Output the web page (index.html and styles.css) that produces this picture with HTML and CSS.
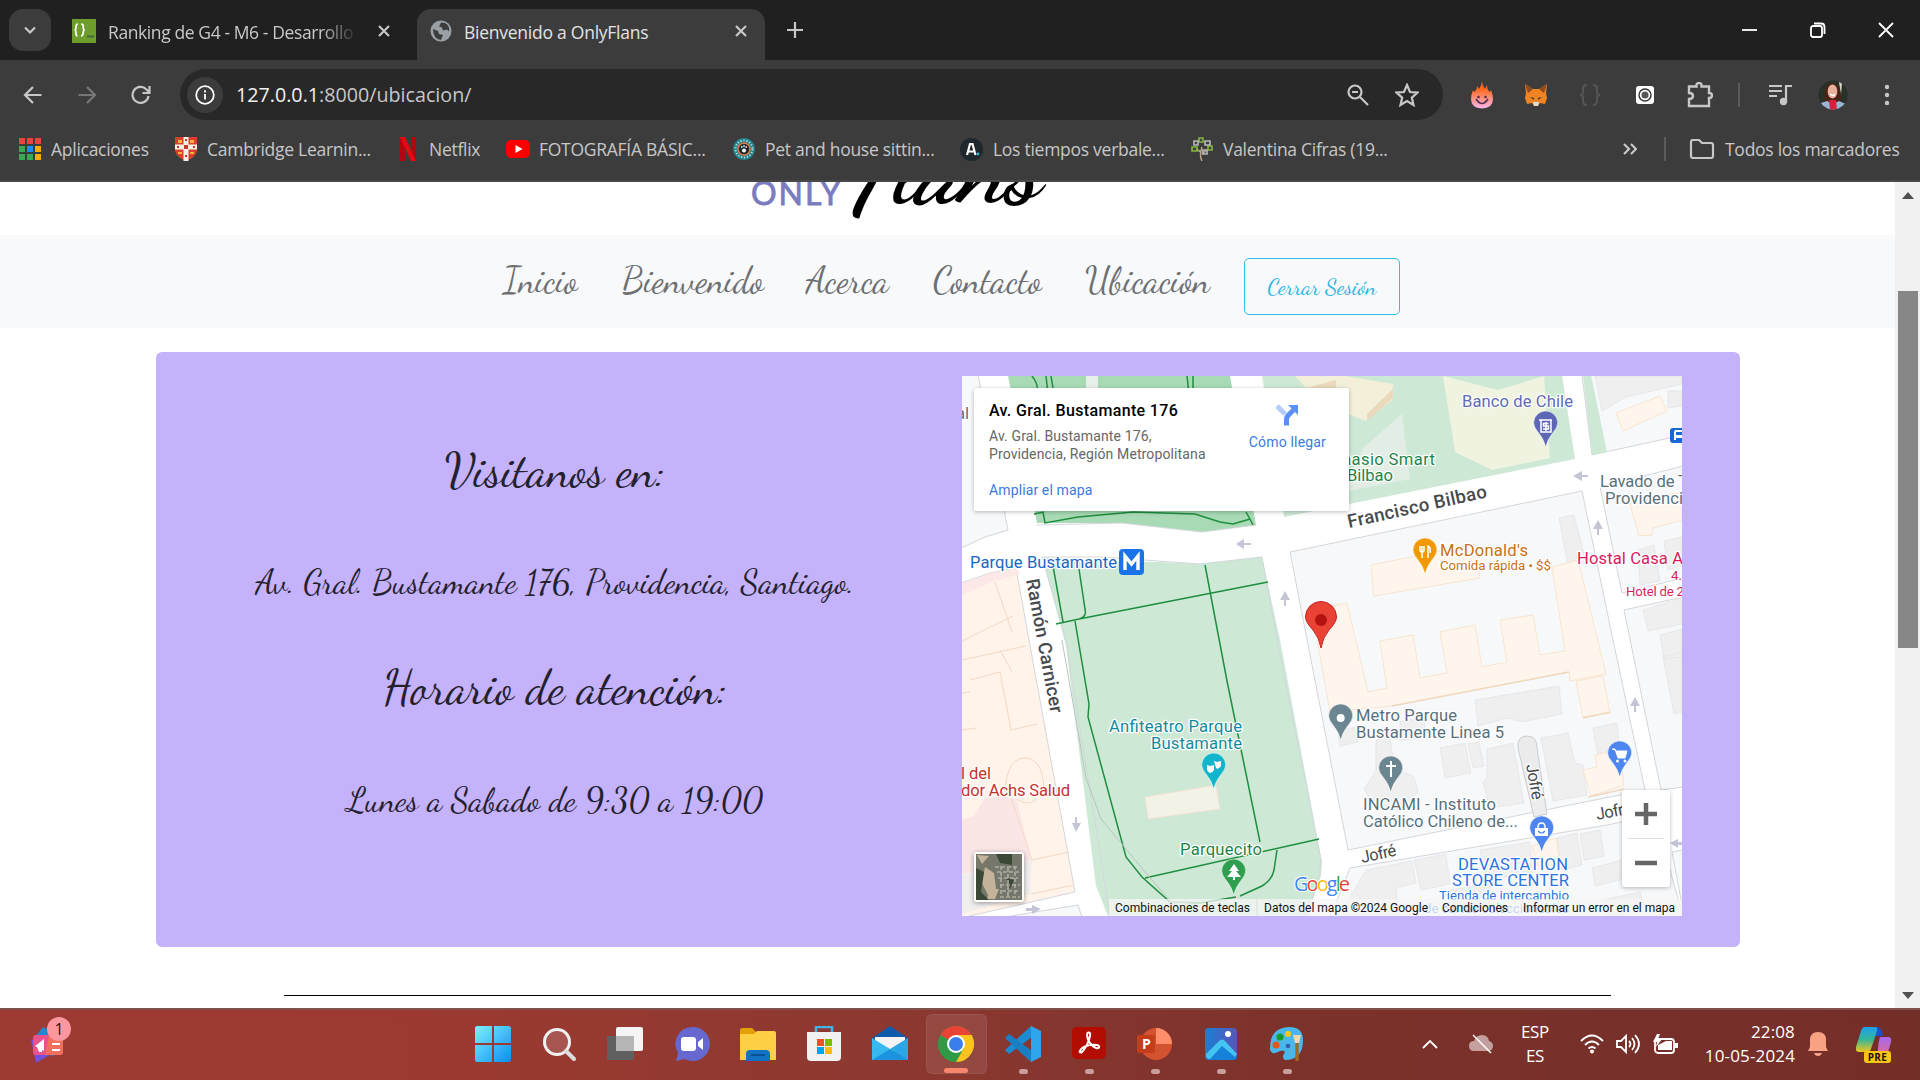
FILE: index.html
```html
<!DOCTYPE html>
<html lang="es">
<head>
<meta charset="utf-8">
<title>Bienvenido a OnlyFlans</title>
<link rel="stylesheet" href="styles.css">
</head>
<body>
<div class="screen">
  <header class="tabs">
    <div class="tab-search"><svg width="14" height="14" viewBox="0 0 14 14"><path d="M2 4.500l5 5 5-5" class="ln w2"/></svg></div>
    <div class="tab">
      <svg width="24" height="24" viewBox="0 0 24 24"><rect width="24" height="24" fill="#6f9d2b"/><path d="M6 5q-2 0-2 3t-1.500 3q1.500 0 1.500 3t1.500 3M9 5q2.500 0 2.300 3t1.500 3q-1.500 0-1.700 3T9 17" fill="none" stroke="#fff" stroke-width="1.700"/><path d="M15 17.500h7" stroke="#3f6a3a" stroke-width="2"/></svg>
      <span class="tab-name faded">Ranking de G4 - M6 - Desarrollo</span>
      <svg class="close" width="12" height="12" viewBox="0 0 12 12"><path d="M1 1l10 10M11 1L1 11" class="ln w2"/></svg>
    </div>
    <div class="tab active">
      <svg width="22" height="22" viewBox="0 0 22 22"><circle cx="11" cy="11" r="10.500" fill="#9aa0a6"/><path d="M3 9l5 2 1 3 4 1-2 5q-8-1-8-11zM11 2.500l-2 4 3 1 1 3 4-1 2 2q1-6-4-8.500z" fill="#3c3c3c"/></svg>
      <span class="tab-name">Bienvenido a OnlyFlans</span>
      <svg class="close" width="12" height="12" viewBox="0 0 12 12"><path d="M1 1l10 10M11 1L1 11" class="ln w2"/></svg>
    </div>
    <svg class="plus" width="16" height="16" viewBox="0 0 16 16"><path d="M8 0v16M0 8h16" class="ln w2"/></svg>
    <div class="win">
      <svg width="16" height="16" viewBox="0 0 16 16"><path d="M0 8h15" class="lw"/></svg>
      <svg width="16" height="16" viewBox="0 0 16 16"><rect x="1" y="4" width="11" height="11" rx="2" class="lw"/><path d="M4 1.500h7q3.500 0 3.500 3.500v7" class="lw"/></svg>
      <svg width="16" height="16" viewBox="0 0 16 16"><path d="M1 1l14 14M15 1L1 15" class="lw"/></svg>
    </div>
  </header>

  <div class="toolbar">
    <div class="navbtns">
      <svg width="20" height="20" viewBox="0 0 20 20"><path d="M18.500 10H2M10 2l-8 8 8 8" class="ln w2"/></svg>
      <svg width="20" height="20" viewBox="0 0 20 20"><path d="M1.500 10H18M10 2l8 8-8 8" fill="none" stroke="#777" stroke-width="2.200"/></svg>
      <svg width="20" height="20" viewBox="0 0 20 20"><path d="M17.500 11a8 8 0 1 1-2-6.500L18 7M18.500 1v7h-7" class="ln w2"/></svg>
    </div>
    <div class="omnibox">
      <span class="info"><svg width="20" height="20" viewBox="0 0 20 20"><circle cx="10" cy="10" r="8.800" class="lw"/><path d="M10 9v5.500M10 5.200v2.200" class="lw"/></svg></span>
      <span class="url"><b>127.0.0.1</b>:8000/ubicacion/</span>
      <svg width="22" height="22" viewBox="0 0 22 22"><circle cx="8" cy="8" r="6.500" class="ln w2"/><path d="M13 13l8 8M5 8h6" class="ln w2"/></svg>
      <svg width="24" height="24" viewBox="0 0 24 24"><path d="M12 2l3 7 7.500.6-5.700 5 1.700 7.400-6.500-4-6.500 4 1.700-7.400-5.700-5L9 9z" class="ln w2"/></svg>
    </div>
    <div class="exts">
      <svg width="22" height="28" viewBox="0 0 22 28"><defs><linearGradient id="fl" x2="0" y2="1"><stop offset=".3" stop-color="#ff6a1e"/><stop offset="1" stop-color="#f9b9ee"/></linearGradient></defs><path d="M11 0q0 4 3 8l2-4q0 5 3 7l1-2q2 5 2 9 0 9-11 9.500Q0 27 0 18q0-4 2-9l1 2q3-2 3-6l2 3q3-4 3-8z" fill="url(#fl)"/><path d="M5 18q6 9 12 0" fill="none" stroke="#55304a" stroke-width="1.600"/><circle cx="7.500" cy="16" r="1.300" fill="#55304a"/><circle cx="14.500" cy="16" r="1.300" fill="#55304a"/></svg>
      <svg width="24" height="24" viewBox="0 0 24 24"><path d="M1 1l8 5h6l8-5-1 9 1 5-2 6-5-1-2 3h-4l-2-3-5 1-2-6 1-5z" fill="#f08422"/><path d="M1 1l8 5-5 4zM23 1l-8 5 5 4z" fill="#8d4a20"/><path d="M6 14l4 1v2zM18 14l-4 1v2z" fill="#333"/><path d="M9 19h6l-1 4h-4z" fill="#ddd"/></svg>
      <svg width="22" height="24" viewBox="0 0 22 24"><path d="M8 2q-4 0-4 4v3q0 3-3 3 3 0 3 3v3q0 4 4 4M14 2q4 0 4 4v3q0 3 3 3-3 0-3 3v3q0 4-4 4" fill="none" stroke="#555" stroke-width="2"/></svg>
      <svg width="18" height="18" viewBox="0 0 18 18"><rect width="18" height="18" rx="3" fill="#fff"/><circle cx="9" cy="9" r="6" fill="none" stroke="#333" stroke-width="1.400"/><circle cx="9" cy="9" r="3.500" fill="#555"/></svg>
      <svg width="26" height="26" viewBox="0 0 26 26"><path d="M2 4.500h7.500q-.5-3.500 2.500-3.500t2.500 3.500H22V11q3 0 3 2.500T22 16v8H2v-7q4 0 4-3t-4-3z" fill="none" stroke="#c7c7c7" stroke-width="2.400"/></svg>
      <i class="vbar"></i>
      <svg width="24" height="22" viewBox="0 0 24 22"><path d="M1 2h13M1 7h13M1 12h8M18 17V2h6" class="ln w2"/><circle cx="15.500" cy="17.500" r="3.700" fill="#c7c7c7"/></svg>
      <svg width="30" height="30" viewBox="0 0 30 30"><defs><clipPath id="av"><circle cx="15" cy="15" r="14.500"/></clipPath></defs><g clip-path="url(#av)"><rect width="30" height="30" fill="#273127"/><path d="M21 2l3 1-1 12" fill="#d8d4c4"/><path d="M7 26Q4 3 14 3t9 20v5z" fill="#4a2318"/><ellipse cx="14.500" cy="11.500" rx="4.800" ry="7" fill="#e8b199"/><path d="M0 24l9-3 6 3 6-3 9 4v5H0z" fill="#9ab6d6"/><path d="M11 20h7l1 10h-7z" fill="#d8203b"/><path d="M12 14q3 3 5 0" stroke="#fff" stroke-width="1.500" fill="none"/></g></svg>
      <svg width="6" height="22" viewBox="0 0 6 22"><g fill="#c7c7c7"><circle cx="3" cy="3" r="2.200"/><circle cx="3" cy="11" r="2.200"/><circle cx="3" cy="19" r="2.200"/></g></svg>
    </div>
  </div>

  <div class="bookmarks">
    <a class="bm b1"><svg width="22" height="22" viewBox="0 0 22 22"><path d="M0 0h6v6H0zM8 0h6v6H8zM16 0h6v6h-6z" fill="#e8453c"/><path d="M0 8h6v6H0zM0 16h6v6H0zM8 16h6v6H8z" fill="#3aa757"/><path d="M8 8h6v6H8z" fill="#1a8cff"/><path d="M16 8h6v6h-6zM16 16h6v6h-6z" fill="#f9ab00"/></svg><span>Aplicaciones</span></a>
    <a class="bm b2"><svg width="22" height="24" viewBox="0 0 22 24"><path d="M0 0h22v14q-2 7-11 10Q2 21 0 14z" fill="#d8402e"/><path d="M11 0v24M0 10h22" stroke="#f4efe4" stroke-width="5"/><path d="M3 3h4v3H3zM15 3h4v3h-4zM3 15h4v2H3zM15 15h4v2h-4z" fill="#f0b53d"/><path d="M9 8h4v4H9zM2 9h2v2H2zM18 9h2v2h-2zM10 2h2v2h-2zM10 18h2v2h-2z" fill="#c23a2b"/></svg><span>Cambridge Learnin...</span></a>
    <a class="bm b3"><svg width="16" height="24" viewBox="0 0 16 24"><path d="M0 0h5v24H0zM11 0h5v24h-5z" fill="#b1060f"/><path d="M0 0h5l11 24h-5z" fill="#e50914"/></svg><span>Netflix</span></a>
    <a class="bm b4"><svg width="24" height="18" viewBox="0 0 24 18"><rect width="24" height="18" rx="5" fill="#f00"/><path d="M9.500 5l7 4-7 4z" fill="#fff"/></svg><span>FOTOGRAFÍA BÁSIC...</span></a>
    <a class="bm b5"><svg width="22" height="22" viewBox="0 0 22 22"><circle cx="11" cy="11" r="11" fill="#23808a"/><circle cx="11" cy="11" r="8.500" fill="none" stroke="#9fd6d4" stroke-width="2" stroke-dasharray="1.500 1.500"/><circle cx="11" cy="11" r="6" fill="#1c2b30" stroke="#e8794a" stroke-width="1.500"/><circle cx="11" cy="12.500" r="2" fill="#fff"/><path d="M8 9h1.500M10.200 8h1.600M12.500 9H14" stroke="#fff" stroke-width="1.500"/></svg><span>Pet and house sittin...</span></a>
    <a class="bm b6"><svg width="23" height="23" viewBox="0 0 23 23"><circle cx="11.500" cy="11.500" r="11.500" fill="#1f282d"/><path d="M7 17l3-11h2.500l3 11M8.500 13.500h5" fill="none" stroke="#fff" stroke-width="2.200"/><circle cx="18" cy="16" r="1.400" fill="#31b8d8"/></svg><span>Los tiempos verbale...</span></a>
    <a class="bm b7"><svg width="22" height="24" viewBox="0 0 22 24"><path d="M11 24q-3-5 0-14M11 17l5-4M10 15l-5-3" stroke="#b7a58c" stroke-width="1.500" fill="none"/><g fill="none" stroke-width="1.600"><path d="M8 1h4v4H8zM1 10h5v4H1zM17 9h4v4h-4z" stroke="#84b740"/><path d="M3 4h4v4H3zM14 4h5v4h-5zM12 13h4v4h-4z" stroke="#b9b9b9"/></g></svg><span>Valentina Cifras (19...</span></a>
    <span class="more"><svg width="14" height="12" viewBox="0 0 14 12"><path d="M1 1l5 5-5 5M8 1l5 5-5 5" class="ln w2"/></svg></span>
    <i class="vbar"></i>
    <a class="bm b8"><svg width="26" height="20" viewBox="0 0 26 20"><path d="M2 3q0-2 2-2h6l3 3h9q2 0 2 2v11q0 2-2 2H4q-2 0-2-2z" class="ln w2"/></svg><span>Todos los marcadores</span></a>
  </div>

  <div class="view">
    <main class="page">
      <div class="logo"><span class="only">ONLY</span><span class="flans"><i>F</i>lans</span></div>
      <nav class="menu">
        <a class="m1">Inicio</a><a class="m2">Bienvenido</a><a class="m3">Acerca</a><a class="m4">Contacto</a><a class="m5">Ubicación</a>
        <button class="logout">Cerrar Sesión</button>
      </nav>
      <section class="card">
        <div class="info-col">
          <h2 class="h-a">Visitanos en:</h2>
          <p class="p-a">Av. Gral. Bustamante 176, Providencia, Santiago.</p>
          <h2 class="h-b">Horario de atención:</h2>
          <p class="p-b">Lunes a Sabado de 9:30 a 19:00</p>
        </div>
        <div class="map">
          <svg width="720" height="540" viewBox="962 376 720 540">
            <rect x="962" y="376" width="720" height="540" fill="#fff"/>
            <g stroke="#d3d6dc" stroke-width="1" fill="#f7f8fa">
              <path d="M961 375h17l30 155-23 7-24 11z"/>
              <path d="M961 583l29-10 26-5 13 72 46 252-114 26z" fill="#fff3ea"/>
              <path d="M1005 917l73-12 4 12z"/>
              <path d="M1290 552l292-61 31 149 32 150-110 22-187 38z"/>
              <path d="M1350 868l257-43 48-10 28 102h-353z"/>
              <path d="M1624 610l59-13v190l-22 3z"/>
              <path d="M1600 487l83-21v112l-61 15z"/>
              <path d="M1582 375h101v60l-91 20z"/>
              <path d="M1672 852l11-2v60z"/>
            </g>
            <path d="M962 583l29-10 26-5 3 6-28 8-30 13z" fill="#fce8e6"/>
            <path d="M962 819l12-3 11-18 14-2 18 3 14 61-69 14z" fill="#fbe6e6"/>
            <path d="M962 875l70-15-2 34-68 20z" fill="#f1eeee"/>
            <g fill="none" stroke="#f3d8c4" stroke-width="1">
              <path d="M962 641l51-25M962 660l64-14M962 693l8-1M962 730l14-2M970 680l30-8 11 58 26-6M1000 650l12 22M995 582l17 50M1005 798q0-40 20-40t19 40M1017 799q10 8 20 0M1032 860l37-8M1031 894l43-9M1011 798l21 62"/>
            </g>
            <path d="M1008 376h222l26 149-54 7-80-9h-85z" fill="#a8dab5"/>
            <path d="M1086 376h12v18h-12z" fill="#e7f1ea"/>
            <path d="M1262 375h300l13 84-291 58z" fill="#cde9d6"/>
            <path d="M1583 375l9 80 15-3-16-77z" fill="#cde9d6"/>
            <path d="M1042 557l58 4 60 1 39 2 63-7 18 83 42 222-1 14-14 40h-199l-12-30-30-240z" fill="#cde9d6"/>
            <path d="M1042 557h60l98 7 62-7M1042 557l24 83 44 276M1262 557l15 83 44 220-2 18-12 38M1037 525l85-2 80 9 54-7" fill="none" stroke="#d3d6dc"/>
            <path d="M1295 376h50l48 8-1 16-26 21-46-18z" fill="#f3efd8"/><path d="M1336 380v16l-36-6zM1393 389v9l-26 23v-7z" fill="#ead9bb"/>
            <path d="M1443 376l55 14 46-14 6 82-58 12-37-18z" fill="#eff3df"/>
            <path d="M1402 414l8 65-67 13 20-44z" fill="#e2eee5"/>
            <g fill="#efefef" stroke="#e1e3e5" stroke-width=".7">
              <path d="M1595 376h87v8l-56 13-24 14zM1668 391h14v15l-14 2z"/>
              <path d="M1559 518l15-3 12 47-17 8zM1638 550l16-5 6 36-20 4zM1664 541l18-4v28l-14 5z"/>
              <path d="M1643 610l39-12v26l-34 7zM1660 635l22-6v28l-18 2zM1663 657l19-5v60l-8 2z"/>
              <path d="M1475 700l84-14 3 28-40 8-15-4-29 8z"/>
              <path d="M1440 748l25-5 6 30-26 5zM1468 744l11-2 5 24-11 2zM1487 777l0-28 26-6 11 60-34 5-7-26zM1541 738l27-5 7 30 8 2 4 30-34 6z"/>
              <path d="M1593 728l24-5 3 30-22 4zM1376 740l14-3 4 30 20 10 4 14-14 20-30-6-10-16 12-18z"/>
              <path d="M1414 860l32-6 4 30-29 6zM1366 870l46-9 4 22-20 5 3 28h-60zM1480 850l50-8 2 30-45 8zM1557 838l20-5 5 32-20 5zM1580 834l20-4 4 26-20 4zM1592 868l30-8 6 18-33 8zM1450 890l40-6v32h-36zM1602 900l38-8 6 20-40 4zM1338 730l20-3v15l-18 4zM1400 722l25-5v20l-25 4z"/>
            </g>
            <g fill="#fef6ed" stroke="#f8dfc5" stroke-width=".8">
              <path d="M1312 610l35-7 21 89 19-4-7-47 33-6 7 43 27-5-7-41 35-7 7 42 25-5-7-42 33-5 7 40 25-4-13-84 26-7 28 114-36 7-1-9-177 34-62 6z"/>
              <path d="M1371 565l105-21 4 34-106 18zM1616 413l44-17 7 15-44 20zM1630 504l52-12v28l-29 8-1 7-13 1z"/>
              <path d="M1576 681l27-5 7 37-27 4zM1583 770l14-3-2-12 24-6 5 36-33 11zM1532 846l24-8 4 26-22 2z"/>
            </g>
            <path d="M1392 706l177-34M1583 718l27-6M1588 797l36-8" stroke="#efd8bd" stroke-width="1.500"/>
            <path d="M1518 748q-1-12 9-12t10 12l10 66-13 3z" fill="#ececec" stroke="#c9ccd0"/>
            <path d="M1145 797l71-12 4 24-72 10z" fill="#f2f2e6" stroke="#f3dccb" stroke-width=".7"/>
            <g fill="none" stroke="#1e8e3e" stroke-width="1.500">
              <path d="M1032 376q8 10 4 18M1046 376l2 18M1051 376l3 18M1187 376l2 18M1193 376v18M1034 514l10-2M1043 512l2 11 33-6 55-5 62 2 25 8 13 2 17-5-4-7M1250 519l3 6"/>
              <path d="M1053 566l10 56M1079 569l6 40q2 8-6 10l-23 5M1079 619l189-37M1205 565l22 116 33 161M1075 621l14 83-1 13 38 140 16 20 28 25 30 1 36-6M1145 878l174-39M1277 850l-3 20q-2 10-12 16l-22 10"/>
            </g>
            <path d="M1062 640l24 138 15 41 50 60 20 23h20" fill="none" stroke="#b8c5bc"/>
            <g fill="#c3c5d6"><path d="M1236 544l8-5v4h7v2h-7v4zM1573 476l9-5v4h6v2h-6v4zM1285 591l5 9h-4v6h-2v-6h-4zM1598 520l5 9h-4v6h-2v-6h-4zM1635 697l5 9h-4v6h-2v-6h-4zM1076 832l-4-9h3v-6h2v6h4zM1041 909l-9-4v3h-6v3h6v3zM1670 843l8-4v3h6v3h-6v3z"/></g>

            <g class="lbl">
              <text x="956" y="419" class="gr">al</text>
              <text x="1462" y="407" fill="#6268b3" textLength="111">Banco de Chile</text>
              <text x="1342" y="465" fill="#1e8449" textLength="93">nasio Smart</text>
              <text x="1347" y="481" fill="#1e8449" textLength="46">Bilbao</text>
              <text x="1600" y="487" class="gr" textLength="88">Lavado de T</text>
              <text x="1605" y="504" class="gr" textLength="78">Providenci</text>
              <text x="1440" y="556" fill="#c77014" textLength="88">McDonald's</text>
              <text x="1440" y="570" fill="#c77014" class="sm" textLength="111">Comida rápida • $$</text>
              <text x="1577" y="564" fill="#d81b60" textLength="106">Hostal Casa A</text>
              <text x="1671" y="580" fill="#d81b60" class="sm">4.</text>
              <text x="1626" y="596" fill="#d81b60" class="sm" textLength="58">Hotel de 2</text>
              <text x="970" y="568" fill="#1967c2" textLength="147">Parque Bustamante</text>
              <text x="1109" y="732" fill="#138a9c" textLength="133">Anfiteatro Parque</text>
              <text x="1151" y="749" fill="#138a9c" textLength="91">Bustamante</text>
              <text x="1180" y="855" fill="#1e8449" textLength="82">Parquecito</text>
              <text x="961" y="779" fill="#c5322c" textLength="30">l del</text>
              <text x="961" y="796" fill="#c5322c" textLength="109">dor Achs Salud</text>
              <text x="1356" y="721" class="gr" textLength="101">Metro Parque</text>
              <text x="1356" y="738" class="gr" textLength="148">Bustamente Linea 5</text>
              <text x="1363" y="810" class="gr" textLength="133">INCAMI - Instituto</text>
              <text x="1363" y="827" class="gr" textLength="155">Católico Chileno de...</text>
              <text x="1458" y="870" fill="#2a73e0" textLength="110">DEVASTATION</text>
              <text x="1452" y="886" fill="#2a73e0" textLength="117">STORE CENTER</text>
              <text x="1439" y="900" fill="#2a73e0" class="sm" textLength="130">Tienda de intercambio</text>
              <text x="1424" y="913" fill="#2a73e0" class="sm" textLength="145">de cartas coleccionables</text>
              <g fill="#474a4d">
                <text transform="translate(1349 528) rotate(-12.500)" class="st" textLength="142">Francisco Bilbao</text>
                <text transform="translate(1026 580) rotate(79.500)" class="st" textLength="136">Ramón Carnicer</text>
                <text transform="translate(1362 863) rotate(-12)" textLength="36">Jofré</text>
                <text transform="translate(1597 820) rotate(-11)" textLength="36">Jofré</text>
                <text transform="translate(1526 765) rotate(80)" textLength="36">Jofré</text>
              </g>
            </g>

            <defs><path id="pin" d="M1545.700 447q-2-8-7-14-5-6-5-10a12 12 0 0 1 24 0q0 4-5 10-5 6-7 14z"/></defs>
            <g stroke="#fff" stroke-width=".5">
              <use href="#pin" fill="#5d67b5"/>
              <use href="#pin" transform="translate(-120.700 127)" fill="#f29900"/>
              <use href="#pin" transform="translate(-332 342)" fill="#12b5cb"/>
              <use href="#pin" transform="translate(-312 448)" fill="#2f9e4f"/>
              <use href="#pin" transform="translate(-205 293)" fill="#6b8591"/>
              <use href="#pin" transform="translate(-155 345)" fill="#6b8591"/>
              <use href="#pin" transform="translate(74 330)" fill="#4c86ee"/>
              <use href="#pin" transform="translate(-4 405)" fill="#4c86ee"/>
            </g>
            <g fill="none" stroke="#fff" stroke-width="1.500">
              <path d="M1539 420h13M1541 420v12h10v-12M1548.500 423.500h-5v2.500h5v3h-5.500M1546 422v9"/>
              <path d="M1420 546v4q0 2 2 2t2-2v-4M1422 546v12M1428 558v-12q3 1 2 7"/>
              <path d="M1391 761v16M1386 766h10" stroke-width="2"/>
            </g>
            <path d="M1612 749h3l3 9h7l2-7h-11" fill="#fff" stroke="#fff"/><circle cx="1617.500" cy="761" r="1.500" fill="#fff"/><circle cx="1625" cy="761" r="1.500" fill="#fff"/>
            <path d="M1535 828h13v8h-13z" fill="#fff"/><path d="M1538 829v-2q0-4 3.500-4t3.500 4v2" fill="none" stroke="#fff" stroke-width="1.500"/><path d="M1538 831q3.500 4 7 0" fill="none" stroke="#4c86ee" stroke-width="1.200"/>
            <circle cx="1340.700" cy="718" r="4" fill="#fff"/>
            <path d="M1234 864l5 7h-3l5 6h-6v3h-2v-3h-6l5-6h-3z" fill="#fff"/>
            <path d="M1207 765l3 1 4-1v5q-3.500 6-7 0zM1214 761l3 1 4-1v5q-3 4-5 2z" fill="#fff"/>
            <path d="M1321 648q-1.500-10-8-18-7.500-8-7.500-13a15.500 15.500 0 0 1 31 0q0 5-7.500 13-6.500 8-8 18z" fill="#ea4335" stroke="#c5221f"/><circle cx="1321" cy="620" r="6" fill="#b31412"/>
            <rect x="1119" y="549" width="25" height="26" rx="4" fill="#1a73e8"/><path d="M1125 570v-14l6.500 8 6.500-8v14" fill="none" stroke="#fff" stroke-width="3.400"/>
            <rect x="1670" y="428" width="16" height="15" rx="3" fill="#1967d2"/><path d="M1675 430h9v10h-2v-2h-6v2h-2v-8z" fill="#fff"/><path d="M1676 432h8v3h-8z" fill="#1967d2"/>
            <text x="1294" y="891" class="goog" textLength="56"><tspan fill="#4285f4">G</tspan><tspan fill="#ea4335">o</tspan><tspan fill="#fbbc04">o</tspan><tspan fill="#4285f4">g</tspan><tspan fill="#34a853">l</tspan><tspan fill="#ea4335">e</tspan></text>
            <rect x="1109" y="899" width="573" height="17" fill="#f5f5f5" opacity=".75"/>
            <g class="attr"><text x="1115" y="912" textLength="135">Combinaciones de teclas</text><text x="1264" y="912" textLength="164">Datos del mapa ©2024 Google</text><text x="1442" y="912" textLength="66">Condiciones</text><text x="1523" y="912" textLength="152">Informar un error en el mapa</text></g>
            <path d="M1257 899v17" stroke="#ddd"/>
          </svg>
          <div class="place">
            <div class="place-text"><strong>Av. Gral. Bustamante 176</strong><span>Av. Gral. Bustamante 176,<br>Providencia, Región Metropolitana</span><a>Ampliar el mapa</a></div>
            <div class="route"><svg width="22" height="22" viewBox="0 0 22 22"><path d="M1 2l8 8" stroke="#b5ccfb" stroke-width="5"/><path d="M10.500 21.500v-6q0-3 3-5.500l4-4" fill="none" stroke="#5b8ff5" stroke-width="5"/><path d="M12 1h10v10z" fill="#5b8ff5"/></svg><a>Cómo llegar</a></div>
          </div>
          <div class="sat"><svg width="46" height="46" viewBox="0 0 46 46"><rect width="46" height="46" fill="#74776a"/><path d="M9 13l9 6 2 16-8 6-6-12zM1 1l12 1-7 8zM14 35h9l-4 10h-8z" fill="#c4b39a"/><path d="M0 14l8 4-3 20 8 8H0zM20 0h16v11l-12-2zM30 24l8 2-4 9z" fill="#3b4836"/><path d="M19 13h24M21 18h22M22 24h20M24 31h20M26 37h18M24 43h20M25 12v30M32 14v30M39 12v30" stroke="#aeaea4" stroke-width="1.600" stroke-dasharray="4 2"/></svg></div>
          <div class="zoom"><svg width="22" height="22" viewBox="0 0 22 22"><path d="M11 0v22M0 11h22" stroke="#666" stroke-width="4.500"/></svg><i></i><svg width="22" height="22" viewBox="0 0 22 22"><path d="M0 11h22" stroke="#666" stroke-width="4.500"/></svg></div>
        </div>
      </section>
      <hr class="rule">
    </main>
    <aside class="scroll"><svg width="12" height="7" viewBox="0 0 12 7"><path d="M0 7l6-7 6 7z" fill="#505050"/></svg><i></i><svg width="12" height="7" viewBox="0 0 12 7"><path d="M0 0l6 7 6-7z" fill="#505050"/></svg></aside>
  </div>

  <footer class="taskbar">
    <div class="widget"><svg width="34" height="38" viewBox="0 0 34 38"><path d="M2 14l10-12 14 6-4 24z" fill="#2386cf"/><path d="M0 14l22 14-17 10z" fill="#7550d8"/><rect x="2" y="10" width="30" height="20" rx="3" fill="#e9528f"/><path d="M18 10h11q3 0 3 3v14q0 3-3 3H14z" fill="#f1705d"/><path d="M4 21l9-7v12zM6 22h5v5H8z" fill="#fff"/><path d="M21 19h8M21 25h8" stroke="#fff" stroke-width="2"/></svg><b>1</b></div>
    <div class="apps">
      <span class="app"><svg width="36" height="36" viewBox="0 0 36 36"><defs><linearGradient id="wn" x2="1" y2="1"><stop stop-color="#7ef0ff"/><stop offset="1" stop-color="#0a8df2"/></linearGradient></defs><path d="M1.500 0H17v17H0V1.500zM19 0h15.500L36 1.500V17H19zM0 19h17v17H1.500L0 34.500zM19 19h17v15.500L34.500 36H19z" fill="url(#wn)"/></svg></span>
      <span class="app"><svg width="36" height="36" viewBox="0 0 36 36"><circle cx="16" cy="16" r="12.500" fill="#ffffff26" stroke="#f1f1f1" stroke-width="3"/><path d="M25 25l8 8" stroke="#ddd" stroke-width="4" stroke-linecap="round"/></svg></span>
      <span class="app"><svg width="36" height="36" viewBox="0 0 36 36"><rect x="0" y="10" width="27" height="24" rx="2" fill="#606060"/><rect x="9" y="1" width="27" height="24" rx="2" fill="#f4f4f4"/><path d="M9 10h18v15H9z" fill="#b5b5b5"/></svg></span>
      <span class="app"><svg width="36" height="36" viewBox="0 0 36 36"><path d="M18 1a17 17 0 1 1-7 32l-9 2 2-8A17 17 0 0 1 18 1z" fill="#6668cf"/><rect x="7" y="11" width="15" height="14" rx="3" fill="#fff"/><path d="M24 16l5-4v12l-5-4z" fill="#fff"/></svg></span>
      <span class="app"><svg width="36" height="36" viewBox="0 0 36 36"><path d="M0 4q0-2 2-2h10l4 4v6H0z" fill="#e3a008"/><path d="M0 8h14l3-3h17q2 0 2 2v27H0z" fill="#fccf45"/><path d="M6 35v-7q0-4 4-4h16q4 0 4 4v7z" fill="#1272c4"/><path d="M11 29h14" stroke="#0b4f92" stroke-width="2"/></svg></span>
      <span class="app"><svg width="36" height="36" viewBox="0 0 36 36"><path d="M10 8V1h16v7" fill="none" stroke="#43b2e8" stroke-width="2.500"/><path d="M1 6h34v25q0 4-4 4H5q-4 0-4-4z" fill="#f1f1f1"/><path d="M11 13h7v7h-7z" fill="#f05023"/><path d="M19 13h7v7h-7z" fill="#7fba00"/><path d="M11 21h7v7h-7z" fill="#00a4ef"/><path d="M19 21h7v7h-7z" fill="#fcb813"/></svg></span>
      <span class="app"><svg width="36" height="36" viewBox="0 0 36 36"><path d="M0 12L18 0l18 12-18 13z" fill="#0e5bab"/><path d="M3 11h30v6L18 27 3 17z" fill="#f4f4f4"/><path d="M36 12v22L18 23z" fill="#2ba6e6"/><path d="M0 34V12l18 11 18 11z" fill="#35b9ef"/><path d="M0 34l18-11 18 11z" fill="#1b93de"/></svg></span>
      <span class="app on"><svg width="36" height="36" viewBox="0 0 36 36"><circle cx="18" cy="18" r="18" fill="#2f9b46"/><path d="M18 18L2.400 9A18 18 0 0 1 33.600 9z" fill="#ea4335"/><path d="M18 9h15.600A18 18 0 0 1 18 36l8-14z" fill="#fcc31e"/><circle cx="18" cy="18" r="9" fill="#fff"/><circle cx="18" cy="18" r="7" fill="#3b7ded"/></svg></span>
      <span class="app run"><svg width="36" height="36" viewBox="0 0 36 36"><path d="M26 0L0 24l4 4L27 11z" fill="#1c8bd1"/><path d="M26 36L0 12l4-4 23 17z" fill="#1a7fc2"/><path d="M26 0l10 5v26l-10 5z" fill="#2fa3ee"/></svg></span>
      <span class="app run"><svg width="36" height="36" viewBox="0 0 36 36"><rect x="1" y="1" width="34" height="32" rx="5" fill="#b20d00"/><path d="M9 25c1-4 9-7 17-6 4 1 2 4-1 3-5-2-9-8-9-13 0-4 4-3 3 1-1 6-5 13-8 16-2 1-3 0-2-1z" fill="none" stroke="#fff" stroke-width="2"/></svg></span>
      <span class="app run"><svg width="36" height="36" viewBox="0 0 36 36"><circle cx="19" cy="18" r="16" fill="#d35230"/><path d="M19 2a16 16 0 0 1 16 16H19z" fill="#ff8f6b"/><rect y="9" width="18" height="18" rx="2" fill="#c43e1c"/><text x="5" y="23" fill="#fff" font-size="14" font-weight="700" font-family="Open Sans">P</text></svg></span>
      <span class="app run"><svg width="36" height="36" viewBox="0 0 36 36"><defs><linearGradient id="ph" x2="1"><stop stop-color="#1a7fd6"/><stop offset="1" stop-color="#5a55b8"/></linearGradient></defs><rect x="2" y="2" width="32" height="32" rx="4" fill="url(#ph)"/><path d="M6 34l13-16 15 13q0 3-4 3z" fill="#1780d8"/><path d="M3 28l13-13q3-3 6 0l12 13-2 3-13-11L7 33q-5 0-4-5z" fill="#45c4f2"/><circle cx="25" cy="8" r="3" fill="#fff"/></svg></span>
      <span class="app run"><svg width="36" height="36" viewBox="0 0 36 36"><path d="M1 24Q0 2 20 1q14 0 14 13 0 20-18 20-4-2 0-8-2-3-7 0-6 3-8-2z" fill="#4ab7ea"/><circle cx="11" cy="11" r="3.500" fill="#159c2c"/><circle cx="19" cy="8" r="3" fill="#fcc80f"/><circle cx="7" cy="19" r="3.500" fill="#e2571c"/><circle cx="19" cy="20" r="2.300" fill="#365cab"/><path d="M28 16v19" stroke="#a66821" stroke-width="3.500"/><path d="M24 9h8l-2 8h-4z" fill="#efd7ae"/></svg></span>
    </div>
    <div class="tray">
      <svg class="chev" width="16" height="10" viewBox="0 0 16 10"><path d="M1 9l7-7 7 7" class="lw"/></svg>
      <svg width="24" height="22" viewBox="0 0 24 22"><path d="M5 18q-5 0-5-5t5-5q2-6 8-6t7 6q4 1 4 5t-4 5z" fill="#c3a09e"/><path d="M4 2l18 18" stroke="#fff" stroke-width="1.500"/></svg>
      <div class="lang">ESP<br>ES</div>
      <svg class="wifi" width="24" height="20" viewBox="0 0 24 20"><path d="M1 7q11-11 22 0M5 11q7-7 14 0M8.500 14.500q3.500-3 7 0" class="lw"/><circle cx="12" cy="17.500" r="2" fill="#fff"/></svg>
      <svg class="vol" width="25" height="22" viewBox="0 0 25 22"><path d="M1 8h4l5-5v16l-5-5H1zM13 8q3 3 0 6M16 5q5 6 0 12M19 2q8 9 0 18" class="lw"/></svg>
      <svg class="bat" width="25" height="20" viewBox="0 0 25 20"><rect x="2" y="5" width="19" height="14" rx="3" class="lw"/><path d="M5 11l8-4h6v9H5zM22 9h3v5h-3zM4 0L0 8h4l-1 5 6-8H5l2-5z" fill="#fff"/></svg>
      <div class="clock">22:08<br>10-05-2024</div>
      <svg class="bell" width="20" height="24" viewBox="0 0 20 24"><path d="M10 0q8 0 8 8v7l2 4H0l2-4V8q0-8 8-8zM6 21h8q-1 3-4 3t-4-3z" fill="#f9a183"/></svg>
      <div class="copilot"><svg width="36" height="34" viewBox="0 0 36 34"><defs><linearGradient id="cp" x2="0" y2="1"><stop stop-color="#1e9ef0"/><stop offset=".5" stop-color="#35b796"/><stop offset="1" stop-color="#f2c51a"/></linearGradient><linearGradient id="cq" x2="0" y2="1"><stop stop-color="#a46af0"/><stop offset="1" stop-color="#f06a84"/></linearGradient></defs><path d="M17 0h5q4 1 5 9h-8z" fill="#1c50c8"/><path d="M9 0h10q3 0 2 4l-6 18q-1 3-4 3H3q-4 0-3-5L5 4q1-4 4-4z" fill="url(#cp)"/><path d="M24 10h8q4 0 3 5l-3 10q-1 6-5 6h-9q4-3 4-9t2-12z" fill="url(#cq)"/></svg><b>PRE</b></div>
    </div>
  </footer>
</div>
</body>
</html>
```
FILE: styles.css
```css
* { box-sizing: border-box; }
body { margin: 0; font-family: "Open Sans", "Noto Sans", sans-serif; }
svg { display: block; flex: none; }
.ln { fill: none; stroke: #c7c7c7; }
.w2 { stroke-width: 2.200; }
.lw { fill: none; stroke: #fff; stroke-width: 1.800; }
.screen { width: 1920px; height: 1080px; overflow: hidden; display: flex; flex-direction: column; background: #fff; }

.tabs { height: 60px; flex: none; background: #202020; display: flex; align-items: center; padding-left: 9px; }
.tab-search { width: 42px; height: 42px; border-radius: 14px; background: #3c3c3c; display: grid; place-items: center; }
.tab { width: 339px; height: 51px; margin: 9px 9px 0 0; padding: 0 0 8px 21px; display: flex; align-items: center; gap: 12px; color: #c9c9c9; font-size: 17.500px; white-space: nowrap; }
.tab.active { width: 348px; margin: 9px 0 0 18px; padding: 0 18px 8px 13px; background: #3c3c3c; border-radius: 14px 14px 0 0; color: #e3e3e3; }
.tab-name { flex: 1; overflow: hidden; letter-spacing: -.250px; padding-top: 2px; }
.faded { margin-right: 8px; letter-spacing: -.400px; -webkit-mask-image: linear-gradient(90deg, #000 85%, transparent); mask-image: linear-gradient(90deg, #000 85%, transparent); }
.plus { margin-left: 22px; }
.win { margin: 0 26px 0 auto; display: flex; gap: 52px; }

.toolbar { height: 69px; flex: none; background: #3c3c3c; display: flex; align-items: center; padding-left: 23px; }
.navbtns { display: flex; gap: 34px; width: 157px; }
.omnibox { width: 1263px; height: 51px; border-radius: 26px; background: #282828; display: flex; align-items: center; padding: 0 24px 0 7px; gap: 26px; }
.info { width: 36px; height: 36px; border-radius: 50%; background: #3c3c3c; display: grid; place-items: center; }
.url { flex: 1; margin-left: -13px; font-size: 19.700px; color: #c7c7c7; }
.url b { font-weight: 400; color: #f1f1f1; }
.exts { flex: 1; display: flex; align-items: center; padding-left: 28px; gap: 31px; }
.exts > :nth-child(4) { margin-left: 4px; }
.exts > :nth-child(5) { margin-left: 2px; }
.exts > :nth-child(6) { margin-left: -6px; }
.exts > :nth-child(7) { margin-left: -3px; }
.exts > :nth-child(8) { margin-left: -5px; }
.exts > :nth-child(9) { margin-left: 5px; }
.vbar { width: 2px; height: 24px; background: #5c5c5c; }

.bookmarks { height: 53px; flex: none; background: #3c3c3c; border-bottom: 2px solid #484848; display: flex; align-items: center; padding: 0 0 11px 19px; color: #c7c7c7; font-size: 17.500px; letter-spacing: -.270px; white-space: nowrap; }
.bm { display: flex; align-items: center; gap: 10px; }
.b1 { width: 156px; } .b2 { width: 225px; } .b3 { width: 106px; gap: 13px; } .b4 { width: 227px; gap: 9px; }
.b5 { width: 227px; } .b6 { width: 231px; } .b7 { width: 432px; }
.more { width: 41px; }
.b8 { margin-left: 23px; }

.view { height: 826px; flex: none; display: flex; }
.page { flex: 1; overflow: hidden; font-family: "Dancing Script", "Liberation Serif", cursive; }
.logo { height: 53px; padding-left: 751px; display: flex; align-items: flex-start; overflow: hidden; line-height: 1; }
.only { width: 92px; font: 400 32px/31px Lato, sans-serif; letter-spacing: 2px; color: #7a7cc0; margin-top: -5px; -webkit-text-stroke: .800px #7a7cc0; }
.flans { font-size: 98px; font-weight: 700; font-style: italic; color: #000; margin-top: -61px; letter-spacing: -.500px; }
.flans i { position: relative; top: 9px; }
.menu { height: 93px; background: #f7f9fb; display: flex; align-items: center; padding-left: 503px; color: #6d6f71; font-size: 36px; white-space: nowrap; }
.menu a { padding-bottom: 2px; }
.m1 { width: 119px; } .m2 { width: 184px; } .m3 { width: 127px; } .m4 { width: 152px; } .m5 { width: 159px; }
.logout { width: 156px; height: 57px; margin-top: 9px; border: 1.500px solid #2ec0de; border-radius: 5px; background: none; color: #2bb6e6; font: 22.500px "Dancing Script", cursive; padding: 0; white-space: nowrap; }
.card { width: 1584px; height: 595px; margin: 24px 0 0 156px; border-radius: 6px; background: #c4b2fb; display: flex; padding: 24px 58px 31px 0; justify-content: space-between; }
.info-col { width: 798px; display: flex; flex-direction: column; text-align: center; color: #24212e; white-space: nowrap; }
.info-col h2, .info-col p { margin: 0; font-weight: 400; line-height: 60px; }
.info-col h2 { font-size: 48px; }
.info-col p { font-size: 33.750px; }
.info-col .h-a { margin-top: 65px; }
.info-col .p-a { margin-top: 51px; }
.info-col .h-b { margin-top: 46px; }
.info-col .p-b { margin-top: 52px; }
.rule { width: 1327px; height: 1px; border: 0; background: #000; margin: 48px 0 0 284px; }

.map { position: relative; width: 720px; height: 540px; overflow: hidden; font-family: Roboto, sans-serif; }
.lbl text { font-family: Roboto, sans-serif; font-size: 16.600px; paint-order: stroke; stroke: #fff; stroke-width: 2.500px; stroke-linejoin: round; }
.lbl .sm { font-size: 13.300px; }
.lbl .st { font-size: 18.500px; font-weight: 500; }
.gr { fill: #57707c; }
.goog { font: 500 20px "Open Sans", sans-serif; paint-order: stroke; stroke: #fff; stroke-width: 2px; }
.attr { font: 12px Roboto, sans-serif; fill: #111; }
.place { position: absolute; left: 12px; top: 12px; width: 375px; height: 123px; background: #fff; border-radius: 2px; box-shadow: 0 1px 4px #0004; display: flex; justify-content: space-between; padding: 13px 23px 0 15px; }
.place-text { display: flex; flex-direction: column; color: #666; font-size: 14px; line-height: 18px; letter-spacing: .120px; }
.place strong { font-size: 16px; font-weight: 500; line-height: 20px; color: #000; margin-bottom: 6px; letter-spacing: .350px; }
.place a { color: #3a7be0; }
.place-text a { margin-top: 18px; }
.route { display: flex; flex-direction: column; align-items: center; font-size: 14px; padding-top: 3px; gap: 8px; letter-spacing: .180px; }
.sat { position: absolute; left: 12px; bottom: 14px; border: 2px solid #fff; border-radius: 3px; box-shadow: 0 1px 5px #0006; }
.zoom { position: absolute; right: 12px; bottom: 29px; width: 48px; height: 97px; background: #fff; border-radius: 3px; box-shadow: 0 1px 4px #0004; display: flex; flex-direction: column; align-items: center; justify-content: space-evenly; }
.zoom i { width: 36px; height: 1px; background: #ddd; }

.scroll { width: 25px; background: #f1f1f1; display: flex; flex-direction: column; align-items: center; padding: 10px 0 9px; }
.scroll i { width: 20px; height: 357px; margin: 92px 0 auto; background: #878787; }

.taskbar { height: 72px; flex: none; border-top: 2px solid #80514b; background: linear-gradient(90deg, #9c3a33, #9c3a32 22%, #8b3830 48%, #7b322b 68%, #742e28); display: flex; align-items: center; color: #fff; padding: 0 0 2px 31px; }
.widget { position: relative; width: 432px; }
.widget b { position: absolute; left: 16px; top: -8px; width: 24px; height: 24px; border-radius: 50%; background: #fb979f; color: #2b1616; font: 16px/24px "Open Sans", sans-serif; text-align: center; }
.apps { display: flex; gap: 6px; }
.app { position: relative; width: 60.200px; height: 60px; display: grid; place-items: center; border-radius: 6px; }
.on { background: #ffffff16; border: 1px solid #ffffff12; }
.on::after, .run::after { content: ""; position: absolute; left: 26px; bottom: 0; width: 9px; height: 5px; border-radius: 3px; background: #c99e9b; }
.on::after { left: 17px; width: 24px; background: #f6866b; }
.tray { margin-left: auto; display: flex; align-items: center; font-size: 17px; line-height: 24px; letter-spacing: -.300px; }
.chev { margin-right: 31px; }
.lang { width: 60px; margin: 0 15px 0 12px; text-align: center; }
.vol { margin: 0 12px; }
.clock { width: 117px; text-align: right; letter-spacing: .150px; }
.bell { margin: 0 28px 0 13px; }
.copilot { position: relative; margin-right: 28px; }
.copilot b { position: absolute; left: 8px; bottom: -2px; width: 27px; height: 12px; border-radius: 3px; background: #fcc414; color: #1c1400; font-size: 10px; line-height: 12px; letter-spacing: .400px; text-align: center; }
```
